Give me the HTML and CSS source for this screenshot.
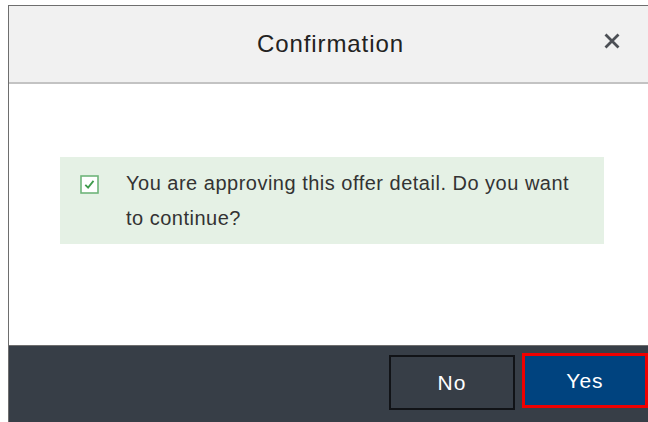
FILE: index.html
```html
<!DOCTYPE html>
<html lang="en">
<head>
<meta charset="utf-8">
<title>Confirmation</title>
<link rel="stylesheet" href="styles.css">
</head>
<body>
  <div class="dialog">
    <header class="dialog-header">
      <h1 class="dialog-title">Confirmation</h1>
      <button class="dialog-close" aria-label="Close">
        <svg width="16" height="16" viewBox="0 0 16 16"><path d="M1.5 1.5 L14.5 14.5 M14.5 1.5 L1.5 14.5" stroke="#4c4f55" stroke-width="2.8" stroke-linecap="butt"/></svg>
      </button>
    </header>
    <main class="dialog-body">
      <div class="notice">
        <span class="notice-check">
          <svg width="19" height="19" viewBox="0 0 19 19"><rect x="1" y="1" width="17" height="17" fill="#fff" stroke="#6fb57a" stroke-width="1.6"/><path d="M5.3 9.8 L8.1 12.6 L13.5 5.9" fill="none" stroke="#3f9b4c" stroke-width="1.8"/></svg>
        </span>
        <p class="notice-text">You are approving this offer detail. Do you want to continue?</p>
      </div>
    </main>
    <footer class="dialog-footer">
      <button class="btn btn-no">No</button>
      <button class="btn btn-yes">Yes</button>
    </footer>
  </div>
</body>
</html>
```
FILE: styles.css
```css
html, body {
  margin: 0;
  padding: 0;
  background: #ffffff;
  overflow: hidden;
  height: 100%;
}

body {
  font-family: "Liberation Sans", Arial, sans-serif;
  padding: 5px 0 0 8px;
  box-sizing: border-box;
}

.dialog {
  width: 640px;
  height: 417px;
  box-sizing: border-box;
  border-top: 1px solid #6e6e6e;
  border-left: 1px solid #6e6e6e;
  display: flex;
  flex-direction: column;
}

.dialog-header {
  height: 76px;
  background: #f1f1f1;
  border-bottom: 2px solid #c3c3c3;
  display: flex;
  align-items: center;
  justify-content: center;
  position: relative;
  flex: none;
}

.dialog-title {
  margin: 0;
  font-size: 24px;
  letter-spacing: 0.9px;
  font-weight: normal;
  color: #222;
  padding-left: 4px;
}

.dialog-close {
  position: absolute;
  right: 28px;
  top: 27px;
  width: 16px;
  height: 16px;
  padding: 0;
  border: 0;
  background: none;
  display: flex;
}

.dialog-body {
  height: 261px;
  flex: none;
  padding: 73px 35px 0 51px;
  box-sizing: border-box;
}

.notice {
  width: 544px;
  height: 87px;
  background: #e5f1e5;
  display: flex;
  align-items: flex-start;
  padding: 18px 0 0 20px;
  box-sizing: border-box;
}

.notice-check {
  display: flex;
  flex: none;
}

.notice-text {
  margin: -9px 0 0 27px;
  font-size: 20px;
  letter-spacing: 0.5px;
  line-height: 35px;
  color: #333;
  width: 462px;
}

.dialog-footer {
  flex: 1;
  background: #373e47;
  border-top: 1px solid #6e6e6e;
  display: flex;
  justify-content: flex-end;
  align-items: flex-start;
  gap: 7px;
  padding: 7px 0 0 0;
}

.btn {
  font-family: "Liberation Sans", Arial, sans-serif;
  font-size: 21px;
  letter-spacing: 1px;
  color: #fff;
  box-sizing: border-box;
  cursor: pointer;
  padding: 0;
}

.btn-no {
  width: 126px;
  height: 55px;
  margin-top: 2px;
  background: #373e47;
  border: 2px solid #111317;
}

.btn-yes {
  width: 126px;
  height: 55px;
  background: #00437f;
  border: 3px solid #f00000;
}
```
